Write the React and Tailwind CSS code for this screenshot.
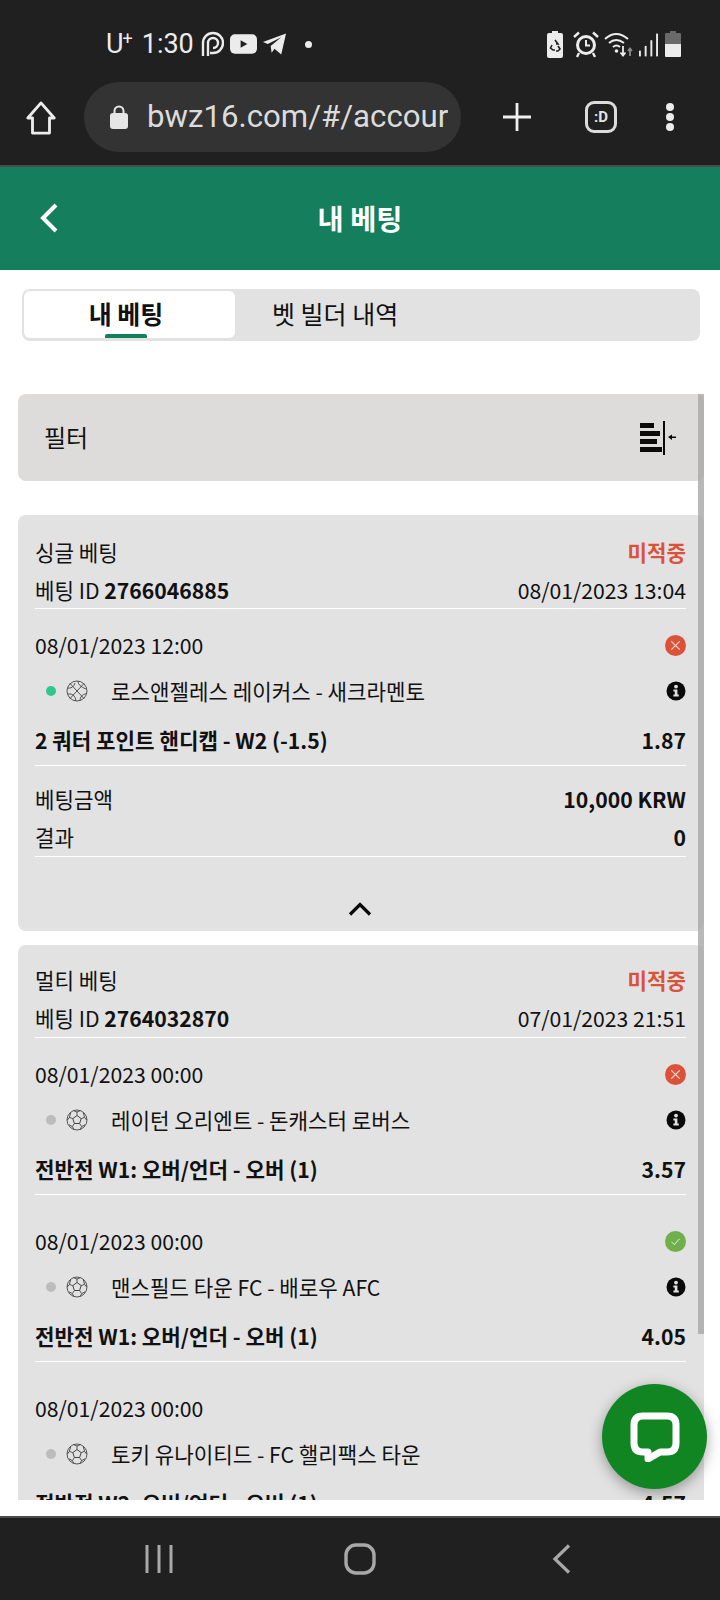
import React from "react";

const Ball = ({ type }) =>
  type === "basket" ? (
    <svg width="22" height="22" viewBox="0 0 22 22" fill="none" stroke="#444" strokeWidth="0.9">
      <circle cx="11" cy="11" r="10" />
      <path d="M4 3.5 L18 18.5 M18 3.5 L4 18.5 M1.5 8 Q7 9 9 3 M12 1.2 Q12 6 20 9 M2 14 Q9 13 10 21 M14 20.5 Q14 15 20.5 13.5" />
    </svg>
  ) : (
    <svg width="22" height="22" viewBox="0 0 22 22" fill="none" stroke="#444" strokeWidth="0.9">
      <circle cx="11" cy="11" r="10" />
      <path d="M11 6.5 L15.2 9.6 L13.6 14.5 L8.4 14.5 L6.8 9.6 Z" strokeWidth="1" />
      <path d="M11 6.5 V3 L7.5 1.6 M11 3 L14.5 1.6 M15.2 9.6 L18.6 8.4 L20.6 11 M18.6 8.4 L17.4 4 M13.6 14.5 L15.6 17.6 L14 20.6 M15.6 17.6 L19 15.8 M8.4 14.5 L6.4 17.6 L8 20.6 M6.4 17.6 L3 15.8 M6.8 9.6 L3.4 8.4 L1.4 11 M3.4 8.4 L4.6 4" />
    </svg>
  );

const Info = () => (
  <svg width="20" height="20" viewBox="0 0 20 20">
    <circle cx="10" cy="10" r="9.5" fill="#0a0a0a" />
    <circle cx="10" cy="5.6" r="1.9" fill="#e2e2e2" />
    <path d="M7.4 8.4 H11.4 V13.6 H12.8 V15.6 H7.4 V13.6 H8.8 V10.4 H7.4 Z" fill="#e2e2e2" />
  </svg>
);

const Status = ({ won }) => (
  <svg width="21" height="21" viewBox="0 0 21 21" fill="none">
    <circle cx="10.5" cy="10.5" r="10.5" fill={won ? "#6fb04d" : "#dc5239"} />
    {won ? (
      <path d="M6.5 10.8 L9.3 13.6 L14.5 7.8" stroke="#e8f3e0" strokeWidth="1" />
    ) : (
      <path d="M6.3 6.3 L14.7 14.7 M14.7 6.3 L6.3 14.7" stroke="#f9e0da" strokeWidth="1.1" />
    )}
  </svg>
);

const Row = ({ left, right, h = "h-[38px]", cls = "" }) => (
  <div className={`flex items-center justify-between ${h} ${cls}`}>
    <div>{left}</div>
    <div>{right}</div>
  </div>
);

const Selection = ({ date, match, market, odds, won, type = "soccer", live, first }) => (
  <div className={first ? "pt-[13px]" : "pt-[23px]"}>
    <Row h="h-[46px]" left={date} right={<div className="flex"><Status won={won} /></div>} />
    <div className="flex items-center h-[46px]">
      <span className={`w-[10px] h-[10px] rounded-full ml-[11px] ${live ? "bg-[#2dc88e]" : "bg-[#bcbcbc]"}`} />
      <span className="ml-[10px] flex"><Ball type={type} /></span>
      <span className="ml-[23px] flex-1">{match}</span>
      <Info />
    </div>
    <Row h="h-[52px]" cls="border-b border-white font-bold" left={market} right={odds} />
  </div>
);

const Header = ({ kind, id, when, idRow = "h-[38px]" }) => (
  <>
    <Row
      left={kind}
      right={<span className="font-bold text-[#d9533a]">미적중</span>}
    />
    <Row
      h={idRow}
      cls="border-b border-white"
      left={
        <span>
          베팅 ID <b className="font-bold">{id}</b>
        </span>
      }
      right={when}
    />
  </>
);

export default function App() {
  return (
    <div className="w-[720px] h-[1600px] flex flex-col bg-white overflow-hidden font-['Noto_Sans_CJK_KR',sans-serif] text-[21.2px] text-[#111111]">
      {/* system bar */}
      <div className="h-[82px] bg-[#202020] flex items-center pl-[106px] pr-[39px] pt-[6px] text-[#ececec] font-['Roboto',sans-serif]">
        <span className="text-[27px] leading-none flex items-start">
          U<span className="text-[18px] leading-none -ml-[1px] mt-[-1px]">+</span>
        </span>
        <span className="text-[27px] leading-none ml-[9px]">1:30</span>
        <svg className="ml-[6px]" width="24" height="26" viewBox="0 0 24 26" fill="none" stroke="#ececec" strokeWidth="2.4">
          <path d="M3 25 V12 A10 10 0 1 1 13 22 H10" />
          <path d="M8 25 V12 A5 5 0 1 1 13 17" />
        </svg>
        <svg className="ml-[6px]" width="27" height="20" viewBox="0 0 28 20">
          <rect width="28" height="20" rx="5" fill="#ececec" />
          <path d="M11 6 L18 10 L11 14 Z" fill="#202020" />
        </svg>
        <svg className="ml-[5px]" width="25" height="24" viewBox="0 0 26 24">
          <path d="M25 1 L20 23 L13 17 L10 21 L9 14 L20 5 L6 12 L1 10 Z" fill="#ececec" />
        </svg>
        <span className="w-[7px] h-[7px] rounded-full bg-[#ececec] ml-[18px]" />
        <div className="ml-auto flex items-center">
          <svg width="16" height="27" viewBox="0 0 16 27">
            <path d="M5 0 H11 V2 H14 Q16 2 16 4 V25 Q16 27 14 27 H2 Q0 27 0 25 V4 Q0 2 2 2 H5 Z" fill="#ececec" />
            <path d="M8 9 L11 13 H9 M5 14 L3.5 17 L6 19 H8 M11 15 L13 18 L11 20 H9" stroke="#202020" strokeWidth="1.6" fill="none" />
          </svg>
          <svg className="ml-[10px]" width="26" height="27" viewBox="0 0 26 27" fill="none" stroke="#ececec">
            <circle cx="13" cy="14" r="8.5" strokeWidth="3" />
            <path d="M13 9 V14.5 H17" strokeWidth="2" />
            <path d="M1 6 L6 1.5 M25 6 L20 1.5 M6 22 L4 26 M20 22 L22 26" strokeWidth="2.4" />
          </svg>
          <svg className="ml-[5px]" width="30" height="26" viewBox="0 0 30 26" fill="none" stroke="#ececec" strokeWidth="2">
            <path d="M1 8 Q12 -2 24 8 M5 12 Q12 6 20 12 M9 16 Q12.5 13 16 16" />
            <circle cx="12.5" cy="20" r="1.8" fill="#ececec" stroke="none" />
            <path d="M19 15 V24 M16.5 21.5 L19 24.5 L21.5 21.5" strokeWidth="1.8" />
            <path d="M26 25 V18 M24 20 L26 17.5 L28 20" stroke="#8a8a8a" strokeWidth="1.8" />
          </svg>
          <svg className="ml-[5px]" width="19" height="25" viewBox="0 0 20 25" fill="#ececec">
            <rect x="0" y="19" width="2" height="6" />
            <rect x="6" y="14" width="2" height="11" />
            <rect x="12" y="8" width="2" height="17" />
            <rect x="18" y="1" width="2" height="24" />
          </svg>
          <svg className="ml-[7px]" width="16" height="26" viewBox="0 0 16 26">
            <path d="M5 0 H11 V2 H15 Q16 2 16 3 V13 H0 V3 Q0 2 1 2 H5 Z" fill="#6a6a6a" />
            <path d="M0 13 H16 V25 Q16 26 15 26 H1 Q0 26 0 25 Z" fill="#ececec" />
          </svg>
        </div>
      </div>

      {/* browser toolbar */}
      <div className="h-[85px] bg-[#202020] border-b-2 border-[#4b4b4b] flex items-start pl-[25px] text-[#e4e4e4]">
        <svg className="mt-[19px]" width="32" height="34" viewBox="0 0 32 36" fill="none" stroke="#ececec" strokeWidth="3" strokeLinejoin="round">
          <path d="M16 2 L30 18 H25 V34 H7 V18 H2 Z" />
        </svg>
        <div className="ml-[27px] w-[377px] h-[70px] rounded-[35px] bg-[#333333] flex items-center pl-[26px] overflow-hidden">
          <svg width="18" height="24" viewBox="0 0 18 24" fill="#e6e6e6">
            <rect x="0" y="8" width="18" height="16" rx="3" />
            <path d="M4.5 9 V6 A4.5 4.5 0 0 1 13.5 6 V9" fill="none" stroke="#e6e6e6" strokeWidth="2" />
          </svg>
          <span className="ml-[19px] mr-[10px] overflow-hidden whitespace-nowrap font-['Roboto',sans-serif] text-[31.2px] leading-[40px] text-[#dcdcdc]">
            bwz16.com/#/accour
          </span>
        </div>
        <svg className="ml-[42px] mt-[21px]" width="28" height="28" viewBox="0 0 28 28" stroke="#f0f0f0" strokeWidth="2.8">
          <path d="M14 0 V28 M0 14 H28" />
        </svg>
        <div className="ml-[54px] mt-[19px] w-[32px] h-[32px] rounded-[9px] border-[3px] border-[#dcdcdc] flex items-center justify-center text-[15px] font-bold leading-none font-['Roboto',sans-serif]">
          :D
        </div>
        <div className="ml-[49px] mt-[21px] flex flex-col gap-[2px]">
          <span className="w-[8px] h-[8px] rounded-full bg-[#ececec]" />
          <span className="w-[8px] h-[8px] rounded-full bg-[#ececec]" />
          <span className="w-[8px] h-[8px] rounded-full bg-[#ececec]" />
        </div>
      </div>

      {/* green header */}
      <div className="h-[103px] bg-[#157f5d] flex items-center justify-center relative">
        <svg className="absolute left-[39px] top-[36px]" width="20" height="30" viewBox="0 0 20 30" fill="none" stroke="#ffffff" strokeWidth="4">
          <path d="M17 2 L4 15 L17 28" />
        </svg>
        <span className="text-white font-bold text-[28.4px]">내 베팅</span>
      </div>

      {/* scrolling content */}
      <div className="relative h-[1230px] overflow-hidden">
        <div className="mt-[19px] ml-[22px] w-[678px] h-[52px] rounded-[8px] bg-[#e2e2e2] p-[2px] pb-[3px] flex text-[25px]">
          <div className="w-[211px] h-full rounded-[6px] bg-white font-bold flex items-center justify-center relative">
            <span className="-mt-[2px] -ml-[7px]">내 베팅</span>
            <span className="absolute left-[81px] bottom-0 w-[42px] h-[4px] rounded-t-[2px] bg-[#157f5d]" />
          </div>
          <div className="ml-[37px] -mt-[2px] flex items-center">벳 빌더 내역</div>
        </div>

        <div className="mt-[53px] ml-[18px] w-[686px] h-[87px] rounded-[8px] bg-[#dddcdb] flex items-center justify-between pl-[26px] pr-[28px] text-[24px]">
          <span className="-mt-[2px]">필터</span>
          <svg width="36" height="34" viewBox="0 0 36 34" fill="#0a0a0a">
            <rect x="0" y="2" width="14" height="5" />
            <rect x="0" y="10" width="20" height="5" />
            <rect x="0" y="18" width="17" height="5" />
            <rect x="0" y="26" width="22" height="5" />
            <rect x="23" y="0" width="2" height="34" />
            <path d="M28 16 L32 13.5 V15.5 H36 V17 H32 V19 Z" />
          </svg>
        </div>

        <div className="mt-[34px] ml-[18px] w-[686px] h-[416px] rounded-[8px] bg-[#e2e2e2] pt-[18px] pl-[17px] pr-[18px]">
          <Header kind="싱글 베팅" id="2766046885" when="08/01/2023 13:04" />
          <Selection
            first
            date="08/01/2023 12:00"
            match="로스앤젤레스 레이커스 - 새크라멘토"
            market="2 쿼터 포인트 핸디캡 - W2 (-1.5)"
            odds="1.87"
            type="basket"
            live
          />
          <div className="pt-[14px]">
            <Row h="h-[37px]" left="베팅금액" right={<b className="font-bold">10,000 KRW</b>} />
            <Row h="h-[40px]" cls="border-b border-white" left="결과" right={<b className="font-bold">0</b>} />
          </div>
          <div className="flex justify-center mt-[45px] -ml-[1px]">
            <svg width="24" height="14" viewBox="0 0 24 14" fill="none" stroke="#0a0a0a" strokeWidth="3.2">
              <path d="M2 12.5 L12 2.5 L22 12.5" />
            </svg>
          </div>
        </div>

        <div className="mt-[14px] ml-[18px] w-[686px] rounded-t-[8px] bg-[#e2e2e2] pt-[16px] pl-[17px] pr-[18px]">
          <Header kind="멀티 베팅" id="2764032870" when="07/01/2023 21:51" idRow="h-[39px]" />
          <Selection
            first
            date="08/01/2023 00:00"
            match="레이턴 오리엔트 - 돈캐스터 로버스"
            market="전반전 W1: 오버/언더 - 오버 (1)"
            odds="3.57"
          />
          <Selection
            won
            date="08/01/2023 00:00"
            match="맨스필드 타운 FC - 배로우 AFC"
            market="전반전 W1: 오버/언더 - 오버 (1)"
            odds="4.05"
          />
          <Selection
            date="08/01/2023 00:00"
            match="토키 유나이티드 - FC 핼리팩스 타운"
            market="전반전 W2: 오버/언더 - 오버 (1)"
            odds="4.57"
          />
        </div>

        {/* scrollbar overlay */}
        <div className="absolute right-[16px] top-[124px] w-[6px] h-[940px] bg-[#a8a8a8]/80" />

        {/* chat button */}
        <div className="absolute left-[602px] top-[1114px] w-[105px] h-[105px] rounded-full bg-[#108522] shadow-[0_4px_14px_rgba(0,0,0,0.35)] flex items-center justify-center">
          <svg width="50" height="50" viewBox="0 0 50 50" fill="none">
            <path
              d="M13 4 H37 Q46 4 46 13 V31 Q46 40 37 40 H30 L18 47 V40 H13 Q4 40 4 31 V13 Q4 4 13 4 Z"
              stroke="#ffffff"
              strokeWidth="7"
              strokeLinejoin="round"
            />
          </svg>
        </div>
      </div>

      <div className="h-[16px] bg-white" />

      {/* nav bar */}
      <div className="flex-1 bg-[#202020] border-t-2 border-[#4b4b4b] flex items-center relative">
        <svg className="ml-[145px]" width="28" height="30" viewBox="0 0 28 30" fill="none" stroke="#a8a8a8" strokeWidth="3">
          <path d="M2 1 V29 M14 1 V29 M26 1 V29" />
        </svg>
        <svg className="ml-[171px]" width="32" height="32" viewBox="0 0 32 32" fill="none" stroke="#a8a8a8" strokeWidth="3.4">
          <rect x="2" y="2" width="28" height="28" rx="10" />
        </svg>
        <svg className="ml-[176px]" width="20" height="30" viewBox="0 0 20 30" fill="none" stroke="#a8a8a8" strokeWidth="3.2">
          <path d="M17 1.5 L3 15 L17 28.5" />
        </svg>
      </div>
    </div>
  );
}
